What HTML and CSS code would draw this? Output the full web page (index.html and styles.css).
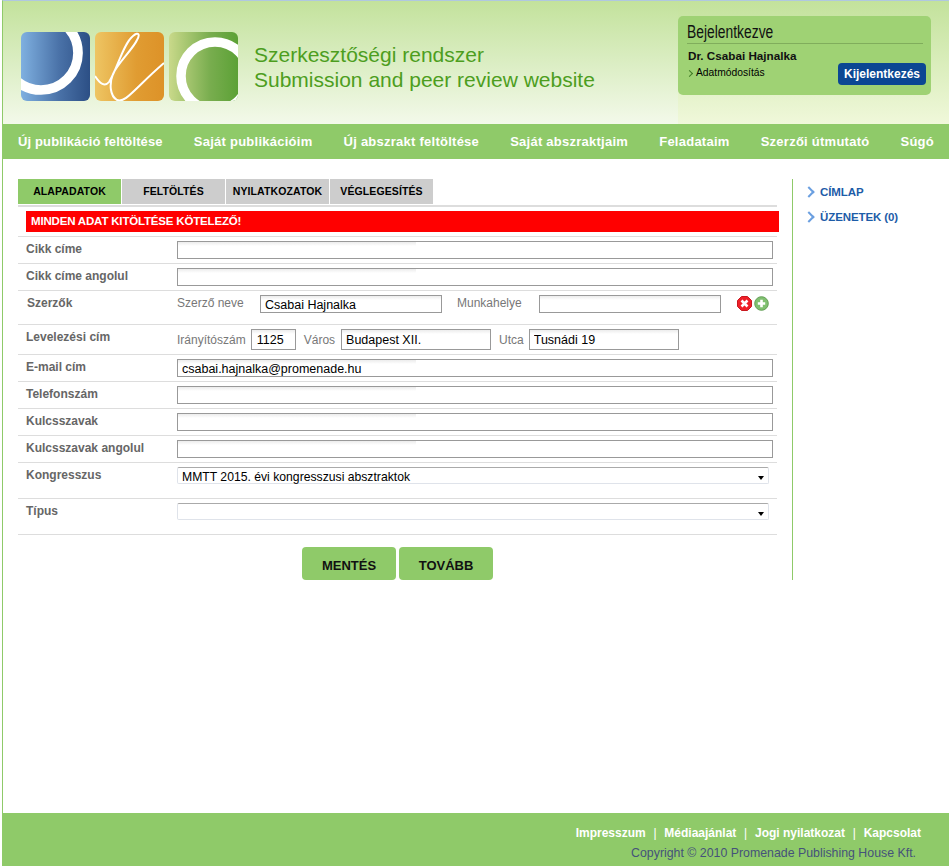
FILE: index.html
```html
<!DOCTYPE html>
<html lang="hu">
<head>
    <meta charset="UTF-8">
    <title>Szerkesztőségi rendszer</title>
    <link rel="stylesheet" href="styles.css">
</head>
<body>
    <div class="page">
        <div class="header">
            <svg class="logo" width="217" height="69" viewBox="0 0 217 69">
                <defs>
                    <linearGradient id="gBlue"><stop offset="0" stop-color="#7fb0e0"/><stop offset="0.55" stop-color="#4a72a8"/><stop offset="1" stop-color="#2c4f85"/></linearGradient>
                    <linearGradient id="gOrange"><stop offset="0" stop-color="#eec563"/><stop offset="0.6" stop-color="#e09c32"/><stop offset="1" stop-color="#dd9228"/></linearGradient>
                    <linearGradient id="gGreen"><stop offset="0" stop-color="#c9d98a"/><stop offset="0.6" stop-color="#78ad4e"/><stop offset="1" stop-color="#5ca136"/></linearGradient>
                    <clipPath id="c1"><rect width="69" height="69" rx="6"/></clipPath>
                </defs>
                <g clip-path="url(#c1)">
                    <rect width="69" height="69" fill="url(#gBlue)"/>
                    <circle cx="20" cy="21" r="37" fill="none" stroke="#fff" stroke-width="9.7"/>
                </g>
                <g transform="translate(74 0)" clip-path="url(#c1)">
                    <rect width="69" height="69" fill="url(#gOrange)"/>
                    <path d="M0 44C5 52 10 55 14 50C22 38 28 12 38 4C44 -1 45 3 42 8C38 17 22 32 18 42C14 52 15 64 22 68C30 72 40 56 69 31" fill="none" stroke="#fff" stroke-width="2"/>
                </g>
                <g transform="translate(148 0)" clip-path="url(#c1)">
                    <rect width="69" height="69" fill="url(#gGreen)"/>
                    <circle cx="46" cy="44" r="34" fill="none" stroke="#fff" stroke-width="9.5"/>
                </g>
            </svg>
            <div class="site-title">
                Szerkesztőségi rendszer<br>
                Submission and peer review website
            </div>
            <div class="login-wrap">
                <div class="login-box">
                    <h3 class="login-title"><span>Bejelentkezve</span></h3>
                    <div class="login-name">Dr. Csabai Hajnalka</div>
                    <div class="login-row">
                        <a class="login-edit" href="#">Adatmódosítás</a>
                        <a class="logout" href="#">Kijelentkezés</a>
                    </div>
                </div>
            </div>
        </div>

        <div class="nav">
            <a href="#">Új publikáció feltöltése</a>
            <a href="#">Saját publikációim</a>
            <a href="#">Új abszrakt feltöltése</a>
            <a href="#">Saját abszraktjaim</a>
            <a href="#">Feladataim</a>
            <a href="#">Szerzői útmutató</a>
            <a href="#">Súgó</a>
        </div>

        <div class="content">
            <div class="main">
                <div class="tabs">
                    <a class="tab active" href="#">ALAPADATOK</a>
                    <a class="tab" href="#">FELTÖLTÉS</a>
                    <a class="tab" href="#">NYILATKOZATOK</a>
                    <a class="tab" href="#">VÉGLEGESÍTÉS</a>
                </div>
                <div class="warning">MINDEN ADAT KITÖLTÉSE KÖTELEZŐ!</div>

                <div class="row">
                    <label>Cikk címe</label>
                    <input class="field wide" type="text">
                </div>
                <div class="row">
                    <label>Cikk címe angolul</label>
                    <input class="field wide" type="text">
                </div>
                <div class="row row-authors">
                    <label class="label-shift">Szerzők</label>
                    <span class="hint hint-author">Szerző neve</span>
                    <input class="field w182" type="text" value="Csabai Hajnalka">
                    <span class="hint hint-work">Munkahelye</span>
                    <input class="field w182" type="text">
                    <svg class="icon icon-del" width="15" height="15" viewBox="0 0 15 15">
                        <path d="M4.5 .5h6l4 4v6l-4 4h-6l-4-4v-6z" fill="#ee2028" stroke="#c8181f"/>
                        <path d="M4.5 4.5l6 6m0-6l-6 6" stroke="#fff" stroke-width="2.6"/>
                    </svg>
                    <svg class="icon" width="15" height="15" viewBox="0 0 15 15">
                        <circle cx="7.5" cy="7.5" r="6.8" fill="#80c070" stroke="#639f55"/>
                        <path d="M7.5 3.8v7.4m-3.7-3.7h7.4" stroke="#fff" stroke-width="2.6"/>
                    </svg>
                </div>
                <div class="row row-address">
                    <label>Levelezési cím</label>
                    <span class="hint">Irányítószám</span>
                    <input class="field w45" type="text" value="1125">
                    <span class="hint hint-city">Város</span>
                    <input class="field w150" type="text" value="Budapest XII.">
                    <span class="hint hint-street">Utca</span>
                    <input class="field w150" type="text" value="Tusnádi 19">
                </div>
                <div class="row">
                    <label>E-mail cím</label>
                    <input class="field wide" type="text" value="csabai.hajnalka@promenade.hu">
                </div>
                <div class="row">
                    <label>Telefonszám</label>
                    <input class="field wide" type="text">
                </div>
                <div class="row">
                    <label>Kulcsszavak</label>
                    <input class="field wide" type="text">
                </div>
                <div class="row">
                    <label>Kulcsszavak angolul</label>
                    <input class="field wide" type="text">
                </div>
                <div class="row row-select">
                    <label>Kongresszus</label>
                    <div class="select">MMTT 2015. évi kongresszusi absztraktok</div>
                </div>
                <div class="row row-select">
                    <label>Típus</label>
                    <div class="select"></div>
                </div>

                <div class="actions">
                    <a class="btn" href="#">MENTÉS</a>
                    <a class="btn" href="#">TOVÁBB</a>
                </div>
            </div>

            <div class="side">
                <a href="#">CÍMLAP</a>
                <a href="#">ÜZENETEK (0)</a>
            </div>
        </div>

        <div class="footer">
            <div class="footer-links">
                <a href="#">Impresszum</a><span>|</span><a href="#">Médiaajánlat</a><span>|</span><a href="#">Jogi nyilatkozat</a><span>|</span><a href="#">Kapcsolat</a>
            </div>
            <div class="copyright">Copyright © 2010 Promenade Publishing House Kft.</div>
        </div>
    </div>
</body>
</html>
```

FILE: styles.css
```css
* { margin: 0; padding: 0; box-sizing: border-box; }

html, body { height: 100%; }

body {
    font-family: "Liberation Sans", Arial, sans-serif;
    background: #fff;
    color: #000;
}

a { text-decoration: none; color: inherit; }

.page {
    height: 866px;
    margin-left: 2px;
    border-left: 1px solid #8fca69;
    border-top: 1px solid #b0c8e0;
    display: flex;
    flex-direction: column;
}

/* header */
.header {
    height: 123px;
    display: flex;
    background: linear-gradient(#c3e29c, #f3f9ea);
}

.logo {
    margin: 31px 0 0 18px;
    flex: none;
}

.site-title {
    margin: 41px 0 0 16px;
    width: 424px;
    font-size: 21px;
    line-height: 25px;
    color: #4d9e1e;
}

.login-wrap {
    flex: 1;
    padding: 15px 18px 0 0;
    background: linear-gradient(#c3e29c, #f0f8da);
}

.login-box {
    height: 79px;
    background: #9fd274;
    border-radius: 5px;
    padding: 6px 5px 0 9px;
}

.login-title {
    font-size: 18px;
    font-weight: normal;
    line-height: 20px;
    height: 22px;
    border-bottom: 1px solid #80ad5c;
    margin-right: 3px;
    color: #111;
}

/* the original heading is a condensed face */
.login-title span {
    display: inline-block;
    transform: scaleX(0.77);
    transform-origin: left;
}

.login-name {
    font-size: 11.7px;
    font-weight: bold;
    margin: 4px 0 0 1px;
    line-height: 15px;
    color: #111;
}

.login-row {
    display: flex;
    justify-content: space-between;
    align-items: flex-start;
}

.login-edit {
    font-size: 10.3px;
    margin: 4px 0 0 9px;
    line-height: 12px;
    position: relative;
}

.login-edit::before {
    content: "";
    position: absolute;
    left: -9px;
    top: 4px;
    width: 4px;
    height: 4px;
    border-top: 1.5px solid #3f7a25;
    border-right: 1.5px solid #3f7a25;
    transform: rotate(45deg);
}

.logout {
    width: 88px;
    height: 22px;
    background: #0b4793;
    border-radius: 4px;
    color: #fff;
    font-size: 12px;
    font-weight: bold;
    line-height: 22px;
    text-align: center;
}

/* main menu */
.nav {
    height: 35px;
    background: #8fca69;
    display: flex;
    padding: 0 15px;
    justify-content: space-between;
}

.nav a {
    color: #fff;
    font-size: 13px;
    font-weight: bold;
    line-height: 36px;
    letter-spacing: 0.25px;
}

.nav a:first-child { letter-spacing: 0.13px; }

/* content */
.content {
    flex: 1;
    display: flex;
    align-items: flex-start;
    padding: 20px 0 0 15px;
}

.main {
    width: 759px;
    margin-right: 15px;
}

.tabs {
    display: flex;
    gap: 1px;
    height: 28px;
    border-bottom: 2px solid #ddd;
}

.tab {
    width: 103px;
    height: 25px;
    background: #cdcdcd;
    font-size: 10.5px;
    font-weight: bold;
    line-height: 25px;
    text-align: center;
    letter-spacing: 0.1px;
}

.tab.active { background: #8fca69; }

.warning {
    width: 753px;
    height: 21px;
    margin: 4px 0 4px 8px;
    padding-left: 5px;
    background: #f00;
    color: #fff;
    font-size: 11.5px;
    font-weight: bold;
    line-height: 21px;
    letter-spacing: -0.18px;
}

.row {
    height: 27px;
    border-top: 1px solid #ddd;
    display: flex;
    align-items: flex-start;
    padding: 4px 0 0 8px;
    font-size: 12px;
}

.row label {
    width: 151px;
    flex: none;
    font-weight: bold;
    color: #666;
    line-height: 16px;
}

.row .label-shift { margin-left: 1px; width: 150px; }

.row-authors { height: 34px; }
.row-address { height: 30px; padding-top: 4px; }
.row-select { height: 36px; }

.hint {
    color: #777;
    line-height: 16px;
}

.row-address .hint { line-height: 21px; margin-top: 1px; }

.hint-author { width: 83px; }
.hint-work { margin: 0 17px 0 15px; }
.hint-city { margin: 0 6px 0 8px; }
.hint-street { margin: 0 5px 0 8px; }

.field {
    height: 18px;
    border: 1px solid #999;
    font-family: "Liberation Sans", Arial, sans-serif;
    font-size: 12.5px;
    color: #000;
    padding: 1px 4px 0;
    background: #fff linear-gradient(#ececec, #fff) no-repeat 0 0 / 238px 4px;
    outline: none;
}

.wide { width: 596px; }
.w182 { width: 182px; }
.w45 { width: 45px; margin-left: 5px; height: 21px; padding-left: 5px; }
.w150 { width: 150px; height: 21px; }

.icon { flex: none; margin-top: 1px; }
.icon-del { margin-left: 16px; margin-right: 2px; }

.select {
    width: 592px;
    height: 17px;
    border: 1px solid #dfe3ea;
    border-top-color: #aaa;
    border-radius: 2px;
    font-size: 12.2px;
    line-height: 18px;
    padding-left: 4px;
    position: relative;
}

.select::after {
    content: "";
    position: absolute;
    right: 4px;
    top: 8px;
    border: 3.5px solid transparent;
    border-top: 4px solid #000;
    border-bottom: 0;
}

.actions {
    border-top: 1px solid #ddd;
    display: flex;
    justify-content: center;
    gap: 3px;
    padding-top: 12px;
}

.btn {
    width: 94px;
    height: 33px;
    background: #8fca69;
    border-radius: 4px;
    font-size: 13px;
    font-weight: bold;
    line-height: 37px;
    text-align: center;
    color: #111;
}

/* right column */
.side {
    width: 157px;
    height: 401px;
    border-left: 1px solid #8fca69;
    padding: 5px 0 0 27px;
}

.side a {
    display: block;
    position: relative;
    font-size: 11.5px;
    font-weight: bold;
    color: #1d5ca8;
    line-height: 16px;
    margin-bottom: 9px;
    letter-spacing: -0.1px;
}

.side a::before {
    content: "";
    position: absolute;
    left: -15px;
    top: 4px;
    width: 6px;
    height: 6px;
    border-top: 2px solid #6a9fe0;
    border-right: 2px solid #6a9fe0;
    transform: rotate(45deg);
}

/* footer */
.footer {
    height: 53px;
    background: #8fca69;
    padding: 13px 28px 0 0;
    text-align: right;
}

.footer-links {
    font-size: 12px;
    font-weight: bold;
    color: #fff;
    line-height: 14px;
}

.footer-links span { margin: 0 7.75px; font-weight: normal; }

.copyright {
    font-size: 12.35px;
    line-height: 14px;
    margin: 6px 5px 0 0;
    color: #45527a;
}
```
